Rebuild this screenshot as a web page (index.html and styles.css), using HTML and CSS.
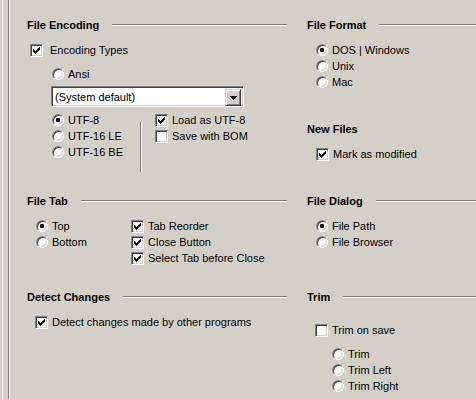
FILE: index.html
```html
<!DOCTYPE html>
<html>
<head>
<meta charset="utf-8">
<link rel="stylesheet" href="styles.css">
</head>
<body>
<div class="window">
  <div class="edge"></div>
  <div class="panel">

    <section class="group">
      <div class="hdr"><span>File Encoding</span><i class="rule"></i></div>
      <label class="opt enc-types"><span class="cb"><svg width="7" height="7" viewBox="0 0 7 7"><path d="M0 2h1v3h-1zM1 3h1v3h-1zM2 4h1v3h-1zM3 3h1v3h-1zM4 2h1v3h-1zM5 1h1v3h-1zM6 0h1v3h-1z"/></svg></span>Encoding Types</label>
      <label class="opt ansi"><span class="rb"></span>Ansi</label>
      <div class="combo">
        <span class="combo-text">(System default)</span>
        <span class="combo-btn"><svg width="7" height="4" viewBox="0 0 7 4"><path d="M0 0h7v1h-1v1h-1v1h-1v1h-1v-1h-1v-1h-1v-1h-1z"/></svg></span>
      </div>
      <div class="utf">
        <div class="utf-radios">
          <label class="opt"><span class="rb on"></span>UTF-8</label>
          <label class="opt"><span class="rb"></span>UTF-16 LE</label>
          <label class="opt"><span class="rb"></span>UTF-16 BE</label>
        </div>
        <div class="vsep"></div>
        <div class="utf-checks">
          <label class="opt"><span class="cb"><svg width="7" height="7" viewBox="0 0 7 7"><path d="M0 2h1v3h-1zM1 3h1v3h-1zM2 4h1v3h-1zM3 3h1v3h-1zM4 2h1v3h-1zM5 1h1v3h-1zM6 0h1v3h-1z"/></svg></span>Load as UTF-8</label>
          <label class="opt"><span class="cb"></span>Save with BOM</label>
        </div>
      </div>
    </section>

    <section class="group">
      <div class="hdr"><span>File Format</span><i class="rule"></i></div>
      <div class="list">
        <label class="opt"><span class="rb on"></span>DOS | Windows</label>
        <label class="opt"><span class="rb"></span>Unix</label>
        <label class="opt"><span class="rb"></span>Mac</label>
      </div>
      <div class="hdr new-files"><span>New Files</span></div>
      <div class="list">
        <label class="opt"><span class="cb"><svg width="7" height="7" viewBox="0 0 7 7"><path d="M0 2h1v3h-1zM1 3h1v3h-1zM2 4h1v3h-1zM3 3h1v3h-1zM4 2h1v3h-1zM5 1h1v3h-1zM6 0h1v3h-1z"/></svg></span>Mark as modified</label>
      </div>
    </section>

    <section class="group">
      <div class="hdr"><span>File Tab</span><i class="rule"></i></div>
      <div class="tab-cols">
        <div class="tab-radios">
          <label class="opt"><span class="rb on"></span>Top</label>
          <label class="opt"><span class="rb"></span>Bottom</label>
        </div>
        <div class="tab-checks">
          <label class="opt"><span class="cb"><svg width="7" height="7" viewBox="0 0 7 7"><path d="M0 2h1v3h-1zM1 3h1v3h-1zM2 4h1v3h-1zM3 3h1v3h-1zM4 2h1v3h-1zM5 1h1v3h-1zM6 0h1v3h-1z"/></svg></span>Tab Reorder</label>
          <label class="opt"><span class="cb"><svg width="7" height="7" viewBox="0 0 7 7"><path d="M0 2h1v3h-1zM1 3h1v3h-1zM2 4h1v3h-1zM3 3h1v3h-1zM4 2h1v3h-1zM5 1h1v3h-1zM6 0h1v3h-1z"/></svg></span>Close Button</label>
          <label class="opt"><span class="cb"><svg width="7" height="7" viewBox="0 0 7 7"><path d="M0 2h1v3h-1zM1 3h1v3h-1zM2 4h1v3h-1zM3 3h1v3h-1zM4 2h1v3h-1zM5 1h1v3h-1zM6 0h1v3h-1z"/></svg></span>Select Tab before Close</label>
        </div>
      </div>
    </section>

    <section class="group">
      <div class="hdr"><span>File Dialog</span><i class="rule"></i></div>
      <div class="list">
        <label class="opt"><span class="rb on"></span>File Path</label>
        <label class="opt"><span class="rb"></span>File Browser</label>
      </div>
    </section>

    <section class="group">
      <div class="hdr"><span>Detect Changes</span><i class="rule"></i></div>
      <div class="list detect">
        <label class="opt"><span class="cb"><svg width="7" height="7" viewBox="0 0 7 7"><path d="M0 2h1v3h-1zM1 3h1v3h-1zM2 4h1v3h-1zM3 3h1v3h-1zM4 2h1v3h-1zM5 1h1v3h-1zM6 0h1v3h-1z"/></svg></span>Detect changes made by other programs</label>
      </div>
    </section>

    <section class="group">
      <div class="hdr"><span>Trim</span><i class="rule"></i></div>
      <div class="list trim-save">
        <label class="opt"><span class="cb"></span>Trim on save</label>
      </div>
      <div class="trim-radios">
        <label class="opt"><span class="rb"></span>Trim</label>
        <label class="opt"><span class="rb"></span>Trim Left</label>
        <label class="opt"><span class="rb"></span>Trim Right</label>
      </div>
    </section>

  </div>
</div>
</body>
</html>
```

FILE: styles.css
```css
html, body {
  margin: 0;
  padding: 0;
}

body {
  width: 476px;
  height: 399px;
  overflow: hidden;
  background: #d4d0c8;
  color: #000;
  font-family: "Liberation Sans", Arial, sans-serif;
  font-size: 11px;
  line-height: 16px;
}

.window {
  display: flex;
  height: 399px;
}

.edge {
  flex: none;
  width: 10px;
  background: linear-gradient(to right,
    #d4d0c8 0 2px,
    #ffffff 2px 3px,
    #d4d0c8 3px 8px,
    #808080 8px 9px,
    #ffffff 9px 10px);
}

.panel {
  flex: 1;
  padding: 18px 0 0 17px;
  display: grid;
  grid-template-columns: 260px 169px;
  grid-template-rows: 176px 96px auto;
  column-gap: 20px;
  align-content: start;
}

.group {
  display: flex;
  flex-direction: column;
  min-width: 0;
}

/* group header with etched rule */
.hdr {
  display: flex;
  align-items: center;
  height: 14px;
  line-height: 14px;
  font-weight: bold;
  white-space: nowrap;
}

.rule {
  flex: 1;
  height: 0;
  margin-left: 13px;
  border-top: 1px solid #808080;
  border-bottom: 1px solid #ffffff;
}

.new-files {
  margin-top: 32px;
}

/* option rows */
.opt {
  display: flex;
  align-items: center;
  height: 16px;
  gap: 4px;
  white-space: nowrap;
}

.list {
  margin-top: 10px;
  padding-left: 9px;
}

/* classic checkbox */
.cb {
  flex: none;
  box-sizing: border-box;
  width: 13px;
  height: 13px;
  border: 1px solid;
  border-color: #808080 #ffffff #ffffff #808080;
  box-shadow: inset 1px 1px 0 #404040, inset -1px -1px 0 #d4d0c8;
  background: #ffffff;
  display: flex;
  align-items: center;
  justify-content: center;
}

.cb svg {
  display: block;
  fill: #000;
  shape-rendering: crispEdges;
}

/* classic radio */
.rb {
  flex: none;
  position: relative;
  box-sizing: border-box;
  width: 12px;
  height: 12px;
  border-radius: 50%;
  border: 1px solid;
  border-color: #808080 #ffffff #ffffff #808080;
  box-shadow: inset 1px 1px 0 #404040, inset -1px -1px 0 #d4d0c8;
  background: #ffffff;
}

.rb.on::after {
  content: "";
  position: absolute;
  left: 3px;
  top: 3px;
  width: 4px;
  height: 4px;
  border-radius: 1px;
  background: #000;
}

/* File Encoding */
.enc-types {
  margin-top: 10px;
  padding-left: 3px;
  gap: 7px;
}

.ansi {
  margin-top: 8px;
  padding-left: 25px;
}

.combo {
  margin-top: 4px;
  margin-left: 24px;
  width: 193px;
  height: 21px;
  box-sizing: border-box;
  border: 1px solid;
  border-color: #808080 #ffffff #ffffff #808080;
  box-shadow: inset 1px 1px 0 #404040, inset -1px -1px 0 #d4d0c8;
  background: #ffffff;
  padding: 2px;
  display: flex;
}

.combo-text {
  flex: 1;
  padding-left: 1px;
  line-height: 17px;
}

.combo-btn {
  flex: none;
  box-sizing: border-box;
  width: 16px;
  height: 17px;
  background: #d4d0c8;
  border: 1px solid;
  border-color: #d4d0c8 #404040 #404040 #d4d0c8;
  box-shadow: inset 1px 1px 0 #ffffff, inset -1px -1px 0 #808080;
  display: flex;
  align-items: center;
  justify-content: center;
}

.combo-btn svg {
  display: block;
  fill: #000;
  shape-rendering: crispEdges;
}

.utf {
  display: flex;
  margin-top: 5px;
}

.utf-radios {
  box-sizing: border-box;
  width: 113px;
  padding-left: 25px;
}

.vsep {
  flex: none;
  width: 0;
  height: 50px;
  margin-top: 10px;
  border-left: 1px solid #808080;
  border-right: 1px solid #ffffff;
}

.utf-checks {
  padding-left: 13px;
}

/* File Tab */
.tab-cols {
  display: flex;
  margin-top: 10px;
}

.tab-radios {
  box-sizing: border-box;
  width: 104px;
  padding-left: 9px;
}

/* Detect changes */
.detect {
  padding-left: 8px;
}

/* Trim */
.trim-save {
  margin-top: 18px;
  padding-left: 8px;
}

.trim-radios {
  margin-top: 8px;
  padding-left: 25px;
}
```
